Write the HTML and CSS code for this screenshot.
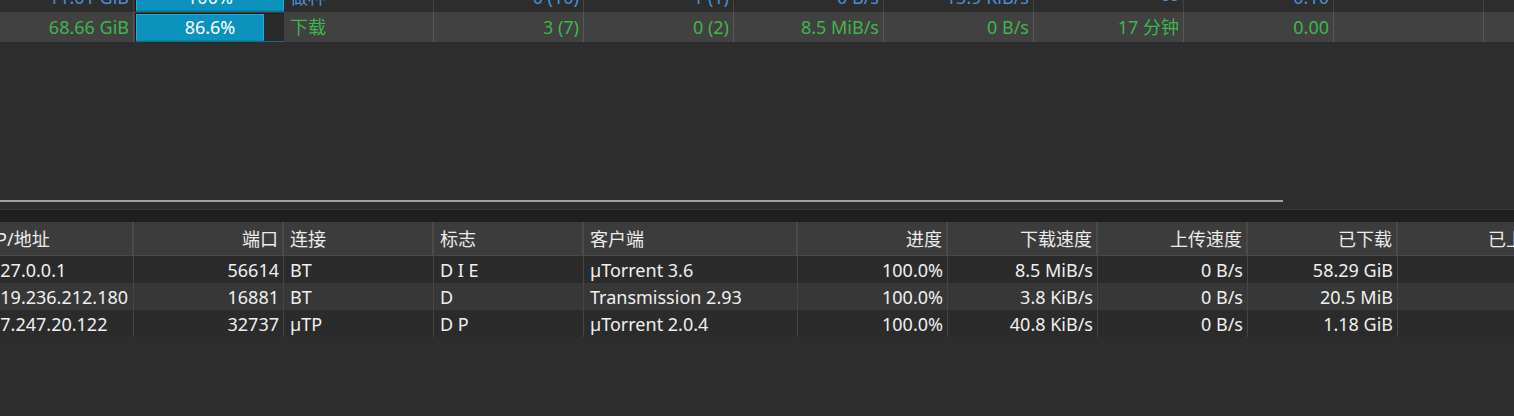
FILE: index.html
```html
<!DOCTYPE html>
<html lang="zh-CN">
<head>
<meta charset="utf-8">
<title>Torrents</title>
<link rel="stylesheet" href="styles.css">
</head>
<body>
<div class="app">
  <section class="top-pane">
    <div class="top-scroll">
      <div class="trow seeding">
        <div class="cell r">11.01 GiB</div>
        <div class="cell bar-cell"><div class="bar"><div class="fill" style="width:100%"></div><span class="bar-label">100%</span></div></div>
        <div class="cell">做种</div>
        <div class="cell r">0 (10)</div>
        <div class="cell r">1 (1)</div>
        <div class="cell r">0 B/s</div>
        <div class="cell r">13.9 KiB/s</div>
        <div class="cell r">∞</div>
        <div class="cell r">0.10</div>
        <div class="cell"></div>
        <div class="cell"></div>
      </div>
      <div class="trow downloading">
        <div class="cell r">68.66 GiB</div>
        <div class="cell bar-cell"><div class="bar"><div class="fill" style="width:86.6%"></div><span class="bar-label">86.6%</span></div></div>
        <div class="cell">下载</div>
        <div class="cell r">3 (7)</div>
        <div class="cell r">0 (2)</div>
        <div class="cell r">8.5 MiB/s</div>
        <div class="cell r">0 B/s</div>
        <div class="cell r">17 分钟</div>
        <div class="cell r">0.00</div>
        <div class="cell"></div>
        <div class="cell"></div>
      </div>
    </div>
  </section>
  <div class="hscroll"><div class="thumb"></div></div>
  <div class="split-line"></div>
  <div class="splitter"></div>
  <section class="peers">
    <div class="prow head">
      <div class="cell">IP/地址</div>
      <div class="cell r">端口</div>
      <div class="cell">连接</div>
      <div class="cell">标志</div>
      <div class="cell">客户端</div>
      <div class="cell r">进度</div>
      <div class="cell r">下载速度</div>
      <div class="cell r">上传速度</div>
      <div class="cell r">已下载</div>
      <div class="cell r">已上传</div>
    </div>
    <div class="prow">
      <div class="cell">127.0.0.1</div>
      <div class="cell r">56614</div>
      <div class="cell">BT</div>
      <div class="cell">D I E</div>
      <div class="cell">µTorrent 3.6</div>
      <div class="cell r">100.0%</div>
      <div class="cell r">8.5 MiB/s</div>
      <div class="cell r">0 B/s</div>
      <div class="cell r">58.29 GiB</div>
      <div class="cell r"></div>
    </div>
    <div class="prow alt">
      <div class="cell">119.236.212.180</div>
      <div class="cell r">16881</div>
      <div class="cell">BT</div>
      <div class="cell">D</div>
      <div class="cell">Transmission 2.93</div>
      <div class="cell r">100.0%</div>
      <div class="cell r">3.8 KiB/s</div>
      <div class="cell r">0 B/s</div>
      <div class="cell r">20.5 MiB</div>
      <div class="cell r"></div>
    </div>
    <div class="prow">
      <div class="cell">27.247.20.122</div>
      <div class="cell r">32737</div>
      <div class="cell">µTP</div>
      <div class="cell">D P</div>
      <div class="cell">µTorrent 2.0.4</div>
      <div class="cell r">100.0%</div>
      <div class="cell r">40.8 KiB/s</div>
      <div class="cell r">0 B/s</div>
      <div class="cell r">1.18 GiB</div>
      <div class="cell r"></div>
    </div>
  </section>
</div>
</body>
</html>
```

FILE: styles.css
```css
html, body {
  margin: 0;
  padding: 0;
  background: #2d2d2d;
  height: 416px;
  overflow: hidden;
}

.app {
  width: 1514px;
  height: 416px;
  overflow: hidden;
  font-family: "Noto Sans", "Noto Sans CJK SC", sans-serif;
  font-size: 18px;
  color: #f0f0f0;
}

.cell {
  box-sizing: border-box;
  flex: 0 0 150px;
  width: 150px;
  padding: 0 5px 0 6px;
  white-space: nowrap;
  overflow: hidden;
  border-right: 1px solid #4a4a4a;
}

.cell.r {
  text-align: right;
  padding: 0 4px 0 6px;
}

/* ---------- top torrents list ---------- */
.top-pane {
  height: 200px;
  overflow: hidden;
}

.top-scroll {
  margin-top: -18px;
  margin-left: -16px;
  width: 1700px;
}

.trow {
  display: flex;
  height: 30px;
  line-height: 30px;
}

.trow.seeding {
  color: #4a8fdc;
}

.trow.seeding .cell {
  border-right-color: #444444;
}

.trow.downloading {
  background: #414141;
  color: #3fb64b;
}

.trow.downloading .cell {
  border-right-color: #575757;
}

.cell.bar-cell {
  padding: 1px 0 1px 1px;
  border-right: none;
}

.bar {
  position: relative;
  box-sizing: border-box;
  height: 29px;
  width: 150px;
  border: 1px solid #1b1b1b;
  border-bottom-color: #0d6f8c;
  background: #2a2a2a;
  line-height: 26px;
}

.fill {
  height: 100%;
  box-sizing: border-box;
  background: #0b93bd;
  border: 1px solid #27acd5;
  border-bottom-color: #0a85ac;
}

.bar-label {
  position: absolute;
  left: 0;
  right: 0;
  top: 0;
  bottom: 0;
  text-align: center;
  color: #ffffff;
}

/* ---------- horizontal scrollbar & splitter ---------- */
.hscroll {
  height: 9px;
  background: #2d2d2d;
}

.thumb {
  width: 1283px;
  height: 2px;
  background: #a3a3a3;
}

.split-line {
  height: 1px;
  background: #3a3a3a;
}

.splitter {
  height: 12px;
  background: #1f1f1f;
}

/* ---------- peers list ---------- */
.peers {
  margin-left: -16px;
  width: 1700px;
}

.prow {
  display: flex;
  height: 27px;
  line-height: 29px;
  background: #2b2b2b;
}

.prow.alt {
  background: #373737;
}

.prow .cell:nth-child(5) {
  flex-basis: 214px;
  width: 214px;
}

.prow .cell {
  border-right-color: #454545;
}

.prow.head {
  height: 34px;
  line-height: 34px;
  background: #3c3c3c;
  color: #ececec;
  border-bottom: 1px solid #4a4a4a;
  box-sizing: border-box;
}

.prow.head .cell {
  border-right: 2px solid #4a4a4a;
}
```
